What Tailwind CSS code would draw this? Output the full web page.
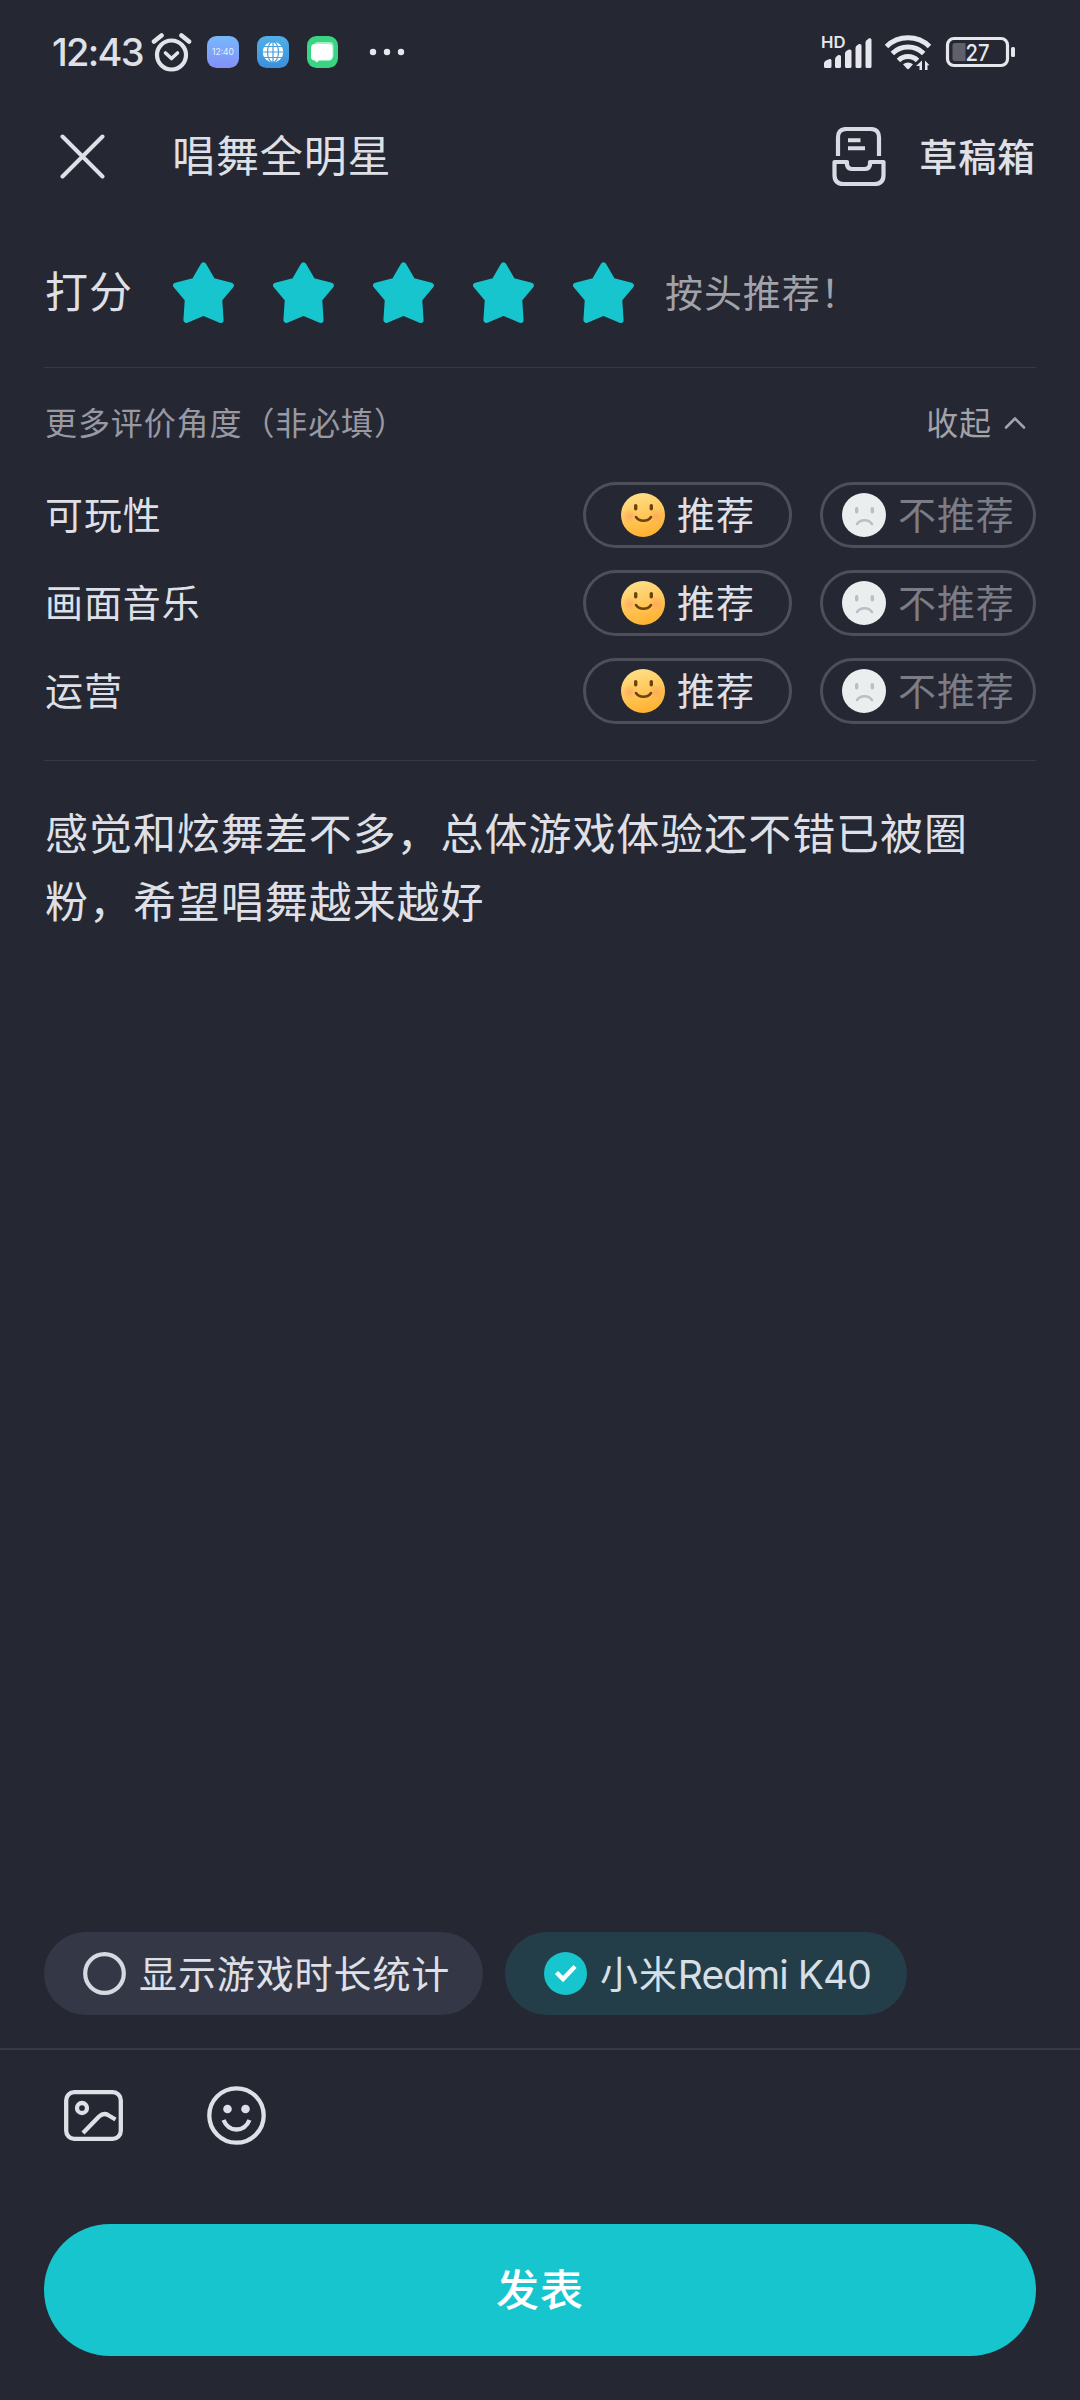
<!DOCTYPE html>
<html lang="zh-CN">
<head>
<meta charset="utf-8">
<title>唱舞全明星</title>
<script src="https://cdn.jsdelivr.net/npm/@tailwindcss/browser@4"></script>
</head>
<body class="bg-[#252732]">
<svg class="absolute w-0 h-0" aria-hidden="true">
  <defs>
    <linearGradient id="face" x1="0.3" y1="0" x2="0.6" y2="1"><stop offset="0" stop-color="#ffe08a"/><stop offset="1" stop-color="#ffb02e"/></linearGradient>
    <radialGradient id="blush"><stop offset="0" stop-color="#ff9a5c" stop-opacity=".6"/><stop offset="1" stop-color="#ff9a5c" stop-opacity="0"/></radialGradient>
    <linearGradient id="clock" x1="0" y1="0" x2="0" y2="1"><stop offset="0" stop-color="#76b8fb"/><stop offset="1" stop-color="#8590f8"/></linearGradient>
    <linearGradient id="web" x1="0" y1="0" x2="0" y2="1"><stop offset="0" stop-color="#4fb0e6"/><stop offset="1" stop-color="#3c8fdc"/></linearGradient>
    <symbol id="star" viewBox="0 0 61 61"><path d="M30.500 3.200 L39.500 18.800 L58 23.500 L46.300 37.500 L47.700 58 L30.500 50.800 L13.300 58 L14.700 37.500 L3 23.500 L21.500 18.800 Z" fill="#17c5ce" stroke="#17c5ce" stroke-width="5.800" stroke-linejoin="round"/></symbol>
    <symbol id="happy" viewBox="0 0 44 44"><circle cx="22" cy="22" r="22" fill="url(#face)"/><circle cx="8.500" cy="23" r="8" fill="url(#blush)"/><circle cx="35.500" cy="23" r="8" fill="url(#blush)"/><rect x="13" y="11" width="3.400" height="6.500" rx="1.700" fill="#6b430c"/><rect x="28.600" y="11" width="3.400" height="6.500" rx="1.700" fill="#6b430c"/><path d="M15 24c3.500 5 11.500 5 15 0" fill="none" stroke="#6b430c" stroke-width="2.600" stroke-linecap="round"/></symbol>
    <symbol id="sad" viewBox="0 0 44 44"><circle cx="22" cy="22" r="22" fill="#eaeeef"/><rect x="13" y="14" width="3.400" height="6.500" rx="1.700" fill="#bcbec1"/><rect x="28.600" y="14" width="3.400" height="6.500" rx="1.700" fill="#bcbec1"/><path d="M15 31c3.500-5 11.500-5 15 0" fill="none" stroke="#bcbec1" stroke-width="2.600" stroke-linecap="round"/></symbol>
  </defs>
</svg>
<div class="w-[1080px] h-[2400px] flex flex-col overflow-hidden bg-[#252732] text-[#dfe0e7] font-['Noto_Sans_CJK_SC',sans-serif]">

  <!-- status bar -->
  <div class="h-[104px] shrink-0 flex items-center justify-between pl-[51px] pr-[65px]">
    <div class="flex items-center">
      <span class="w-[99px] pl-px font-['Inter','Noto_Sans_CJK_SC',sans-serif] text-[38px] leading-none font-medium tracking-[-1.7px] whitespace-nowrap">12:43</span>
      <svg class="w-[42px] h-[40px]" viewBox="0 0 42 40" fill="none" stroke="#e3e4ea" stroke-width="4.200"><circle cx="21.500" cy="23" r="14.500"/><path d="M4 9.500 11.500 3.500M39 9.500 31.500 3.500" stroke-width="4.600" stroke-linecap="round"/><path d="M15.500 21l6 5.500 6-5.500" stroke-linecap="round" stroke-linejoin="round" stroke-width="3.600"/></svg>
      <svg class="ml-[15px] w-[32px] h-[32px]" viewBox="0 0 32 32"><rect width="32" height="32" rx="9.500" fill="url(#clock)"/><text x="16" y="19" font-family="Inter, sans-serif" font-size="8.500" fill="#e8f0ff" text-anchor="middle">12:40</text></svg>
      <svg class="ml-[18px] w-[32px] h-[32px]" viewBox="0 0 32 32"><rect width="32" height="32" rx="9.500" fill="url(#web)"/><circle cx="16" cy="16" r="10.300" fill="#fff"/><g fill="none" stroke="#4a9fde" stroke-width="1.200"><path d="M5 16h22M7 10.500h18M7 21.500h18M16 5v22"/><ellipse cx="16" cy="16" rx="5.500" ry="10.300"/></g></svg>
      <svg class="ml-[18px] w-[31px] h-[32px]" viewBox="0 0 31 32"><rect width="31" height="32" rx="9.500" fill="#3ad583"/><rect x="7" y="6" width="19.500" height="17" rx="4" fill="#a6ecc8"/><path d="M8 8h13.500a4 4 0 0 1 4 4v8.500a4 4 0 0 1-4 4H12l-2.500 2-1.500-2a4 4 0 0 1-4-4V12a4 4 0 0 1 4-4z" fill="#fff"/></svg>
      <svg class="ml-[31px] w-[36px] h-[8px]" viewBox="0 0 36 8" fill="#e6e7ec"><circle cx="4" cy="4" r="3.200"/><circle cx="18" cy="4" r="3.200"/><circle cx="32" cy="4" r="3.200"/></svg>
    </div>
    <svg class="w-[194px] h-[36px]" viewBox="821 34 194 36" fill="#e6e7ec">
      <text x="821" y="47.800" font-family="Inter, sans-serif" font-size="16" font-weight="600" textLength="24.500" lengthAdjust="spacingAndGlyphs">HD</text>
      <path d="M824 66.500v-3q0-2 2-3l3.500-1.500q2-.5 2 1.500v6q0 1.500-1.500 1.500h-4.500q-1.500 0-1.500-1.500zM835 66.500v-7q0-2.500 2-3.500l1.500-1q2.500-.5 2.500 1.500v10q0 1.500-1.500 1.500h-3q-1.500 0-1.500-1.500zM845 66.500v-13q0-2 2-3l2-1q2.500-.5 2.500 1.500v15.500q0 1.500-1.500 1.500h-3.500q-1.500 0-1.500-1.500zM855.500 66.500v-18.500q0-2 2-3l1.500-1q2.500-.5 2.500 1.500v21q0 1.500-1.500 1.500h-3q-1.500 0-1.500-1.500zM865.500 66.500v-24q0-2 2-3l1.500-1.200q2.500-.7 2.500 1.500v26.700q0 1.500-1.500 1.500h-3q-1.500 0-1.500-1.500z"/>
      <g fill="none" stroke="#e6e7ec" stroke-width="5"><path d="M886.500 46.500a31 31 0 0 1 43 0"/><path d="M892.300 53.500a22.500 22.500 0 0 1 31.400 0"/><path d="M898.500 60.500a13.500 13.500 0 0 1 19 0"/></g>
      <path d="M903 64.300q5-3.600 10 0l-3.700 4.200q-1.300 1.500-2.600 0z"/>
      <path d="M922 60.500v10h-2.500v-4.500h-3.500zM925 70.500v-10l4.500 4.700h-2v5.300z"/>
      <rect x="947.500" y="38.500" width="60" height="27" rx="6.500" fill="none" stroke="#e6e7ec" stroke-width="3.200"/>
      <path d="M955 43h10.500v18H955q-2.500 0-2.500-2.500v-13q0-2.500 2.500-2.500z" fill="#5f606a"/>
      <rect x="1011" y="47" width="4" height="10" rx="1.500"/>
      <text x="977.500" y="60.500" font-family="Inter, sans-serif" font-size="23.500" font-weight="500" text-anchor="middle" textLength="24" lengthAdjust="spacingAndGlyphs">27</text>
    </svg>
  </div>

  <!-- title bar -->
  <div class="h-[104px] shrink-0 flex items-center pl-[60px] pr-[44px]">
    <svg class="w-[45px] h-[45px]" viewBox="0 0 45 45" stroke="#dfe0e7" stroke-width="4" stroke-linecap="round"><path d="M2.500 2.500l40 40M42.500 2.500l-40 40"/></svg>
    <h1 class="ml-[67px] pb-[5px] text-[43px] leading-none tracking-[0.9px]">唱舞全明星</h1>
    <svg class="ml-auto mt-px w-[54px] h-[60px]" viewBox="833 127 54 60" fill="none" stroke="#d9dae3" stroke-width="4.200"><path d="M839 156v-18.500q0-8.500 8.500-8.500h24q8.500 0 8.500 8.500V156"/><path d="M849 140.200h12.500M849 148.300h17" stroke-width="4"/><path d="M835.500 162h12.500v3q1 4 5 4h13q4 0 5-4v-3h13.500v13q0 9-9 9h-31q-9 0-9-9z" stroke-linejoin="round"/></svg>
    <span class="ml-[33px] pb-[3px] text-[38px] leading-none font-medium tracking-[0.9px]">草稿箱</span>
  </div>

  <!-- rating -->
  <div class="h-[160px] shrink-0 mx-[44px] pt-[10px] flex items-center border-b border-[#363843]">
    <span class="w-[129px] pl-px pb-[6px] text-[43px] leading-none tracking-[0.9px] whitespace-nowrap">打分</span>
    <div class="flex gap-[39px]">
      <svg class="w-[61px] h-[61px]"><use href="#star"/></svg>
      <svg class="w-[61px] h-[61px]"><use href="#star"/></svg>
      <svg class="w-[61px] h-[61px]"><use href="#star"/></svg>
      <svg class="w-[61px] h-[61px]"><use href="#star"/></svg>
      <svg class="w-[61px] h-[61px]"><use href="#star"/></svg>
    </div>
    <span class="ml-[31px] pb-[4px] text-[38px] leading-none tracking-[0.9px] text-[#a1a2aa]">按头推荐！</span>
  </div>

  <!-- aspects -->
  <div class="h-[393px] shrink-0 mx-[44px] flex flex-col border-b border-[#363843]">
    <div class="h-[114px] pb-[4px] flex items-center justify-between text-[32px] leading-none tracking-[0.9px] text-[#9899a2]">
      <span class="pl-px pb-[4px]">更多评价角度（非必填）</span>
      <span class="flex items-center pr-[10px] text-[#a1a2aa]"><span class="pb-[4px]">收起</span><svg class="ml-[12px] w-[22px] h-[14px]" viewBox="0 0 22 14" fill="none" stroke="#a1a2aa" stroke-width="2.600" stroke-linecap="round" stroke-linejoin="round"><path d="M2 11.500l9-9 9 9"/></svg></span>
    </div>
    <div class="flex flex-col gap-[22px]">
      <div class="h-[66px] flex items-center text-[38px] leading-none tracking-[0.9px]">
        <span class="mr-auto pl-px pb-[4px]">可玩性</span>
        <div class="w-[209px] h-full rounded-full border-3 border-[#4d4f5a] pl-[35px] flex items-center gap-[12px]"><svg class="w-[44px] h-[44px]"><use href="#happy"/></svg><span class="pb-[4px]">推荐</span></div>
        <div class="ml-[28px] w-[216px] h-full rounded-full border-3 border-[#4d4f5a] pl-[19px] flex items-center gap-[12px] text-[#7b7c86]"><svg class="w-[44px] h-[44px]"><use href="#sad"/></svg><span class="pb-[4px]">不推荐</span></div>
      </div>
      <div class="h-[66px] flex items-center text-[38px] leading-none tracking-[0.9px]">
        <span class="mr-auto pl-px pb-[4px]">画面音乐</span>
        <div class="w-[209px] h-full rounded-full border-3 border-[#4d4f5a] pl-[35px] flex items-center gap-[12px]"><svg class="w-[44px] h-[44px]"><use href="#happy"/></svg><span class="pb-[4px]">推荐</span></div>
        <div class="ml-[28px] w-[216px] h-full rounded-full border-3 border-[#4d4f5a] pl-[19px] flex items-center gap-[12px] text-[#7b7c86]"><svg class="w-[44px] h-[44px]"><use href="#sad"/></svg><span class="pb-[4px]">不推荐</span></div>
      </div>
      <div class="h-[66px] flex items-center text-[38px] leading-none tracking-[0.9px]">
        <span class="mr-auto pl-px pb-[4px]">运营</span>
        <div class="w-[209px] h-full rounded-full border-3 border-[#4d4f5a] pl-[35px] flex items-center gap-[12px]"><svg class="w-[44px] h-[44px]"><use href="#happy"/></svg><span class="pb-[4px]">推荐</span></div>
        <div class="ml-[28px] w-[216px] h-full rounded-full border-3 border-[#4d4f5a] pl-[19px] flex items-center gap-[12px] text-[#7b7c86]"><svg class="w-[44px] h-[44px]"><use href="#sad"/></svg><span class="pb-[4px]">不推荐</span></div>
      </div>
    </div>
  </div>

  <!-- review text -->
  <p class="grow mx-[44px] pl-px pt-[36px] text-[43px] leading-[68px] tracking-[0.95px] whitespace-nowrap">感觉和炫舞差不多，总体游戏体验还不错已被圈<br>粉，希望唱舞越来越好</p>

  <!-- option chips -->
  <div class="h-[118px] shrink-0 px-[44px] flex items-start gap-[22px] border-b-2 border-[#373944] text-[38px] leading-none tracking-[0.9px]">
    <div class="w-[439px] h-[83px] rounded-full bg-[#343846] pl-[39px] flex items-center gap-[13px] whitespace-nowrap">
      <svg class="w-[43px] h-[43px]" viewBox="0 0 43 43"><circle cx="21.500" cy="21.500" r="19.300" fill="none" stroke="#d6d8e2" stroke-width="4.200"/></svg>
      <span class="pb-[4px]">显示游戏时长统计</span>
    </div>
    <div class="w-[402px] h-[83px] rounded-full bg-[#243e49] pl-[39px] flex items-center gap-[13px] whitespace-nowrap">
      <svg class="w-[43px] h-[43px]" viewBox="0 0 43 43"><circle cx="21.500" cy="21.500" r="21.500" fill="#17c5ce"/><path d="M12.500 20.500l6.500 6.500 12-12.500" fill="none" stroke="#fff" stroke-width="4.400"/></svg>
      <span class="flex items-center text-[#d6dfe6]"><span class="pb-[4px]">小米</span><span class="pt-[2px] font-['Inter',sans-serif] text-[39px] tracking-[-0.95px]">Redmi K40</span></span>
    </div>
  </div>

  <!-- toolbar -->
  <div class="h-[174px] shrink-0 pt-[36px] pl-[64px] flex items-start gap-[84px]">
    <svg class="w-[59px] h-[59px]" viewBox="64 2086 59 59" fill="none" stroke="#dfe0e7" stroke-width="4.300"><rect x="66.200" y="2092.200" width="54.600" height="46.600" rx="8"/><circle cx="82" cy="2108" r="5"/><path d="M83 2133l16-16.500q4.500-4 9-1.500l7.500 4.500"/></svg>
    <svg class="w-[59px] h-[59px]" viewBox="0 0 59 59" fill="none" stroke="#dfe0e7" stroke-width="4.300"><circle cx="29.500" cy="29.500" r="27.200"/><circle cx="20.500" cy="23" r="4.300" fill="#dfe0e7" stroke="none"/><circle cx="38.500" cy="23" r="4.300" fill="#dfe0e7" stroke="none"/><path d="M16.500 34q4 9.500 13 9.500t13-9.500"/></svg>
  </div>

  <!-- submit -->
  <button class="shrink-0 mx-[44px] mb-[44px] pb-[5px] h-[132px] rounded-full bg-[#17c5ce] text-white text-[43px] leading-none font-medium tracking-[0.9px]">发表</button>
</div>
</body>
</html>
